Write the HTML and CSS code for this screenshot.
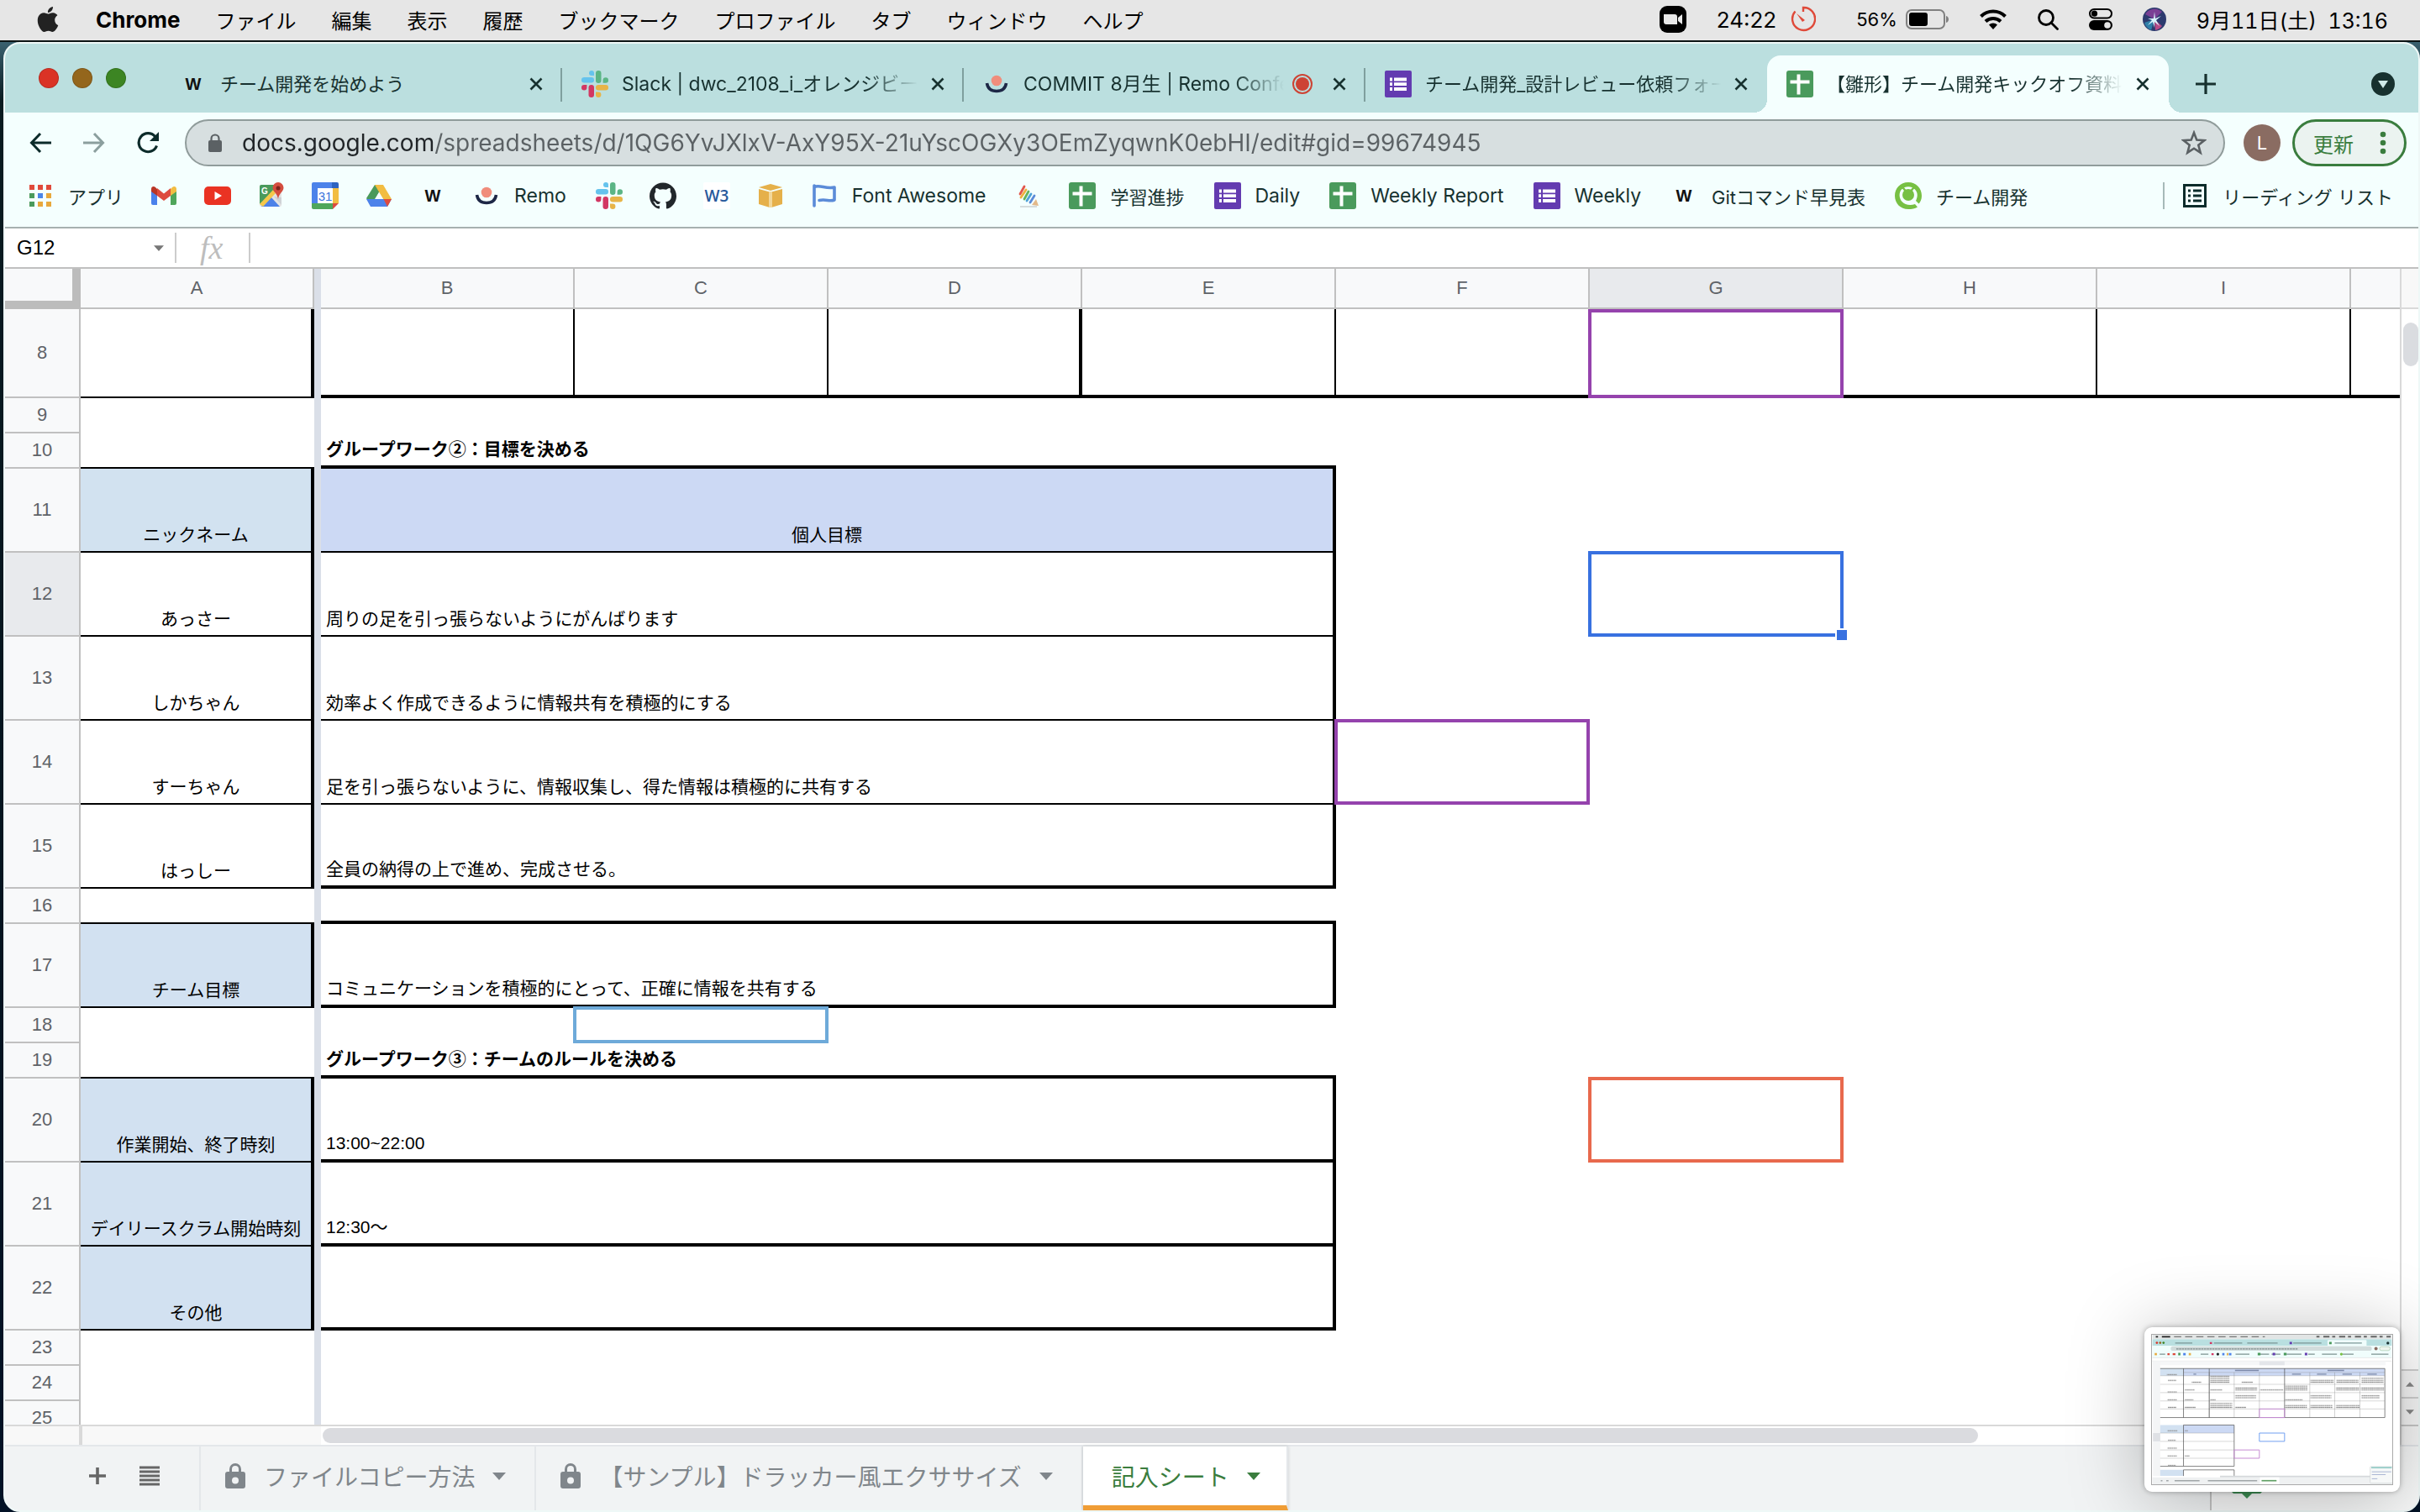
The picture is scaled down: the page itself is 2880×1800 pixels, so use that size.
FILE: index.html
```html
<!DOCTYPE html>
<html lang="ja">
<head>
<meta charset="utf-8">
<title>【雛形】チーム開発キックオフ資料</title>
<link rel="stylesheet" href="styles.css">
</head>
<body>
<svg class="defs" aria-hidden="true">
  <symbol id="i-close" viewBox="0 0 16 16"><path d="M1.500 1.500l13 13M14.500 1.500l-13 13" stroke="currentColor" stroke-width="2.600" fill="none"/></symbol>
  <symbol id="i-w" viewBox="0 0 32 32"><text x="16" y="23" text-anchor="middle" font-family="Liberation Sans, sans-serif" font-weight="700" font-size="20" fill="#111">W</text></symbol>
  <symbol id="i-slack" viewBox="0 0 32 32">
    <g fill="#65c3ed"><path d="M12 0a3 3 0 0 1 3 3v3h-3a3 3 0 0 1 0-6z"/><rect x="0" y="8" width="15" height="6.500" rx="3.200"/></g>
    <g fill="#5bb585"><rect x="17" y="0" width="6.500" height="15" rx="3.200"/><path d="M32 11.500a3.200 3.200 0 0 1-3.200 3.200h-3.200v-3.200a3.200 3.200 0 0 1 6.400 0z"/></g>
    <g fill="#e7b447"><rect x="17" y="17" width="15" height="6.500" rx="3.200"/><path d="M17 25.600h3.200a3.200 3.200 0 1 1-3.200 3.200z"/></g>
    <g fill="#d23763"><rect x="8.500" y="17" width="6.500" height="15" rx="3.200"/><path d="M0 20.200A3.200 3.200 0 0 1 3.200 17h3.200v3.200a3.200 3.200 0 0 1-6.400 0z"/></g>
  </symbol>
  <symbol id="i-remo" viewBox="0 0 32 32"><circle cx="16" cy="12" r="6.300" fill="#f08d7c"/><path d="M4.500 15c1 6.500 5.500 9.500 11.500 9.500S26.500 21.500 27.500 15" stroke="#1d2746" stroke-width="3.600" fill="none"/></symbol>
  <symbol id="i-sheets" viewBox="0 0 32 32"><rect width="32" height="32" rx="3" fill="#4a9a5c"/><path d="M4.500 13.500h23M14.500 4.500v24" stroke="#fff" stroke-width="4" fill="none"/></symbol>
  <symbol id="i-forms" viewBox="0 0 32 32"><rect width="32" height="32" rx="2" fill="#633bb0"/><path d="M11 10.500h15M11 16.200h15M11 22h15" stroke="#fff" stroke-width="3.800"/><path d="M6 10.500h3M6 16.200h3M6 22h3" stroke="#fff" stroke-width="3.800"/></symbol>
  <symbol id="i-lock" viewBox="0 0 24 32"><path d="M6.500 13V8a5.500 5.500 0 0 1 11 0v5" fill="none" stroke="currentColor" stroke-width="3"/><path fill-rule="evenodd" d="M3 11h18a3 3 0 0 1 3 3v14a3 3 0 0 1-3 3H3a3 3 0 0 1-3-3V14a3 3 0 0 1 3-3zm9 6.500a4 4 0 1 0 0 8 4 4 0 0 0 0-8z" fill="currentColor"/></symbol>
  <symbol id="i-down" viewBox="0 0 16 9"><path d="M0 0h16L8 9z" fill="currentColor"/></symbol>
</svg>

<header class="menubar">
  <svg class="apple" viewBox="0 0 24 24" role="img" aria-label="Apple"><path fill="#222" d="M12.152 6.896c-.948 0-2.415-1.078-3.960-1.040-2.040.027-3.910 1.183-4.961 3.014-2.117 3.675-.546 9.103 1.519 12.090 1.013 1.454 2.208 3.090 3.792 3.039 1.520-.065 2.090-.987 3.935-.987 1.831 0 2.350.987 3.960.948 1.637-.026 2.676-1.480 3.676-2.948 1.156-1.688 1.636-3.325 1.662-3.415-.039-.013-3.182-1.221-3.220-4.857-.026-3.040 2.480-4.494 2.597-4.559-1.429-2.090-3.623-2.324-4.390-2.376-2-.156-3.675 1.090-4.610 1.090zM15.530 3.830c.843-1.012 1.400-2.427 1.245-3.830-1.207.052-2.662.805-3.532 1.818-.780.896-1.454 2.338-1.273 3.714 1.338.104 2.715-.688 3.559-1.701"/></svg>
  <nav class="menus">
    <button class="menu app">Chrome</button>
    <button class="menu">ファイル</button>
    <button class="menu">編集</button>
    <button class="menu">表示</button>
    <button class="menu">履歴</button>
    <button class="menu">ブックマーク</button>
    <button class="menu">プロファイル</button>
    <button class="menu">タブ</button>
    <button class="menu">ウィンドウ</button>
    <button class="menu">ヘルプ</button>
  </nav>
  <div class="status">
    <svg width="32" height="32" viewBox="0 0 32 32"><rect width="32" height="32" rx="9"/><path d="M5 10h13a3 3 0 0 1 3 3v9H8a3 3 0 0 1-3-3zM22 14l5-4v12l-5-4z" fill="#e8e8e8"/></svg>
    <span class="pair wide"><span>24:22</span>
      <svg width="30" height="32" viewBox="0 0 30 32"><path d="M15 7V2a13.500 13.500 0 1 1-9.500 4.500" fill="none" stroke="#df4a3a" stroke-width="2.400"/><path d="M7 9l10 8-3 2z" fill="#df4a3a"/></svg></span>
    <span class="pair battery"><span class="percent">56%</span>
      <svg width="52" height="24" viewBox="0 0 52 24"><rect x="1" y="1" width="45" height="22" rx="6" fill="none" stroke="#808080" stroke-width="2"/><rect x="4" y="4" width="22" height="16" rx="3"/><path d="M48 8c4 1 4 7 0 8z" fill="#808080"/></svg></span>
    <svg width="32" height="24" viewBox="0 0 32 24"><g fill="none" stroke="#000" stroke-width="4"><path d="M1.500 8.500a20.500 20.500 0 0 1 29 0"/><path d="M7 14.500a13 13 0 0 1 18 0"/></g><path d="M16 24l-5-5.500a7 7 0 0 1 10 0z"/></svg>
    <svg width="26" height="26" viewBox="0 0 26 26"><g fill="none" stroke="#000" stroke-width="2.800"><circle cx="11" cy="11" r="8.500"/><path d="M17 17l7.500 7.500" stroke-linecap="round"/></g></svg>
    <svg width="28" height="26" viewBox="0 0 28 26"><rect x="1" y="1" width="26" height="10.500" rx="5.200" fill="none" stroke="#000" stroke-width="2"/><circle cx="6.500" cy="6.200" r="3.600"/><rect y="14" width="28" height="12" rx="6"/><circle cx="22" cy="20" r="3.800" fill="#e6e6e6"/></svg>
    <svg width="28" height="28" viewBox="0 0 28 28"><circle cx="14" cy="14" r="14" fill="#2c3a6e"/><path d="M3 8a13 13 0 0 1 20-3l-9 9z" fill="#7a3f94"/><path d="M2 18l12-4-4 13A14 14 0 0 1 2 18z" fill="#2f7fa8"/><path d="M14 14l9 8a13 13 0 0 1-8 5z" fill="#b54a86"/><path d="M14 5l1 8 7-3-6 5 4 7-6-5 0 7-2-7-6 4 5-6-5-2 7 0z" fill="#d8f3fa"/></svg>
    <time>9月11日(土)&nbsp; 13:16</time>
  </div>
</header>

<div class="window">
  <div class="tabstrip">
    <div class="lights"><i class="light red"></i><i class="light amber"></i><i class="light green"></i></div>
    <div class="tabs" role="tablist">
      <div class="tab"><svg class="fav"><use href="#i-w"/></svg><span class="title jp">チーム開発を始めよう</span><button class="close" aria-label="閉じる"><svg><use href="#i-close"/></svg></button></div>
      <div class="tab"><svg class="fav"><use href="#i-slack"/></svg><span class="title fade">Slack | dwc_2108_i_オレンジビーチ</span><button class="close" aria-label="閉じる"><svg><use href="#i-close"/></svg></button></div>
      <div class="tab"><svg class="fav"><use href="#i-remo"/></svg><span class="title fade">COMMIT 8月生 | Remo Conference</span><svg class="rec" viewBox="0 0 24 24"><circle cx="12" cy="12" r="11" fill="none" stroke="#cd4334" stroke-width="2"/><circle cx="12" cy="12" r="8" fill="#cd4334"/></svg><button class="close" aria-label="閉じる"><svg><use href="#i-close"/></svg></button></div>
      <div class="tab last"><svg class="fav"><use href="#i-forms"/></svg><span class="title jp fade">チーム開発_設計レビュー依頼フォーム</span><button class="close" aria-label="閉じる"><svg><use href="#i-close"/></svg></button></div>
      <div class="tab active"><svg class="fav"><use href="#i-sheets"/></svg><span class="title jp fade">【雛形】チーム開発キックオフ資料</span><button class="close" aria-label="閉じる"><svg><use href="#i-close"/></svg></button></div>
    </div>
    <button class="plain newtab" aria-label="新しいタブ"><svg width="24" height="24" viewBox="0 0 24 24"><path d="M12 0v24M0 12h24" stroke="currentColor" stroke-width="3.200"/></svg></button>
    <button class="plain tabsearch" aria-label="タブを検索"><svg width="28" height="28" viewBox="0 0 28 28"><circle cx="14" cy="14" r="14" fill="#17312f"/><path d="M8 10h12l-6 9z" fill="#cfeae8"/></svg></button>
  </div>

  <div class="toolbar">
    <button class="nav" aria-label="戻る"><svg viewBox="0 0 26 26"><path d="M26 13H3M13 2L2.500 13 13 24" fill="none" stroke="#0c2b2a" stroke-width="3"/></svg></button>
    <button class="nav" aria-label="進む"><svg viewBox="0 0 26 26"><path d="M0 13h23M13 2l10.500 11L13 24" fill="none" stroke="#8b9f9e" stroke-width="3"/></svg></button>
    <button class="nav" aria-label="再読み込み"><svg viewBox="0 0 26 26"><path d="M23.500 16.500A11 11 0 1 1 21.500 5.500" fill="none" stroke="#0c2b2a" stroke-width="3.200"/><path d="M26 0v11H15z" fill="#0c2b2a"/></svg></button>
    <div class="omnibox">
      <svg class="padlock" viewBox="0 0 16 22"><path d="M3.500 10V6a4.500 4.500 0 0 1 9 0v4" fill="none" stroke="#5b6164" stroke-width="2.200"/><rect y="8" width="16" height="14" rx="2" fill="#5b6164"/></svg>
      <input class="url" aria-label="アドレス" value="docs.google.com/spreadsheets/d/1QG6YvJXlxV-AxY95X-21uYscOGXy3OEmZyqwnK0ebHI/edit#gid=99674945">
      <button class="plain" aria-label="ブックマークに追加"><svg width="30" height="30" viewBox="0 0 30 30"><path d="M15 3l3.300 8.600 9.200.500-7.200 5.700 2.400 8.900L15 21.700l-7.700 5 2.400-8.900-7.200-5.700 9.200-.500z" fill="none" stroke="#5b6164" stroke-width="2.600"/></svg></button>
    </div>
    <button class="avatar">L</button>
    <button class="update">更新<svg width="8" height="28" viewBox="0 0 8 28"><g fill="#3a7d3e"><circle cx="4" cy="4" r="3.300"/><circle cx="4" cy="14" r="3.300"/><circle cx="4" cy="24" r="3.300"/></g></svg></button>
  </div>

  <nav class="bookmarks">
    <a href="#" class="bm jp"><svg viewBox="0 0 32 32"><g fill="#e04a3b"><path d="M3 3h6v6H3zM13 3h6v6h-6zM23 3h6v6h-6z"/></g><g fill="#4a9a5c"><path d="M3 13h6v6H3zM3 23h6v6H3z"/></g><path d="M13 13h6v6h-6z" fill="#4a86e8"/><path d="M23 13h6v6h-6zM13 23h6v6h-6zM23 23h6v6h-6z" fill="#e8a83c"/></svg>アプリ</a>
    <a href="#" class="bm" aria-label="Gmail"><svg viewBox="0 0 32 32"><path d="M1 9v16a2 2 0 0 0 2 2h5V14z" fill="#4a82ec"/><path d="M31 9v16a2 2 0 0 1-2 2h-5V14z" fill="#4fa65b"/><path d="M24 8v8l7-5V8c0-3-3-4-5-2z" fill="#f2bd42"/><path d="M8 8v8l-7-5V8c0-3 3-4 5-2z" fill="#b93526"/><path d="M8 7l8 6.500L24 7v9l-8 6-8-6z" fill="#dd4b3e"/></svg></a>
    <a href="#" class="bm" aria-label="YouTube"><svg viewBox="0 0 32 32"><rect y="5" width="32" height="22" rx="5" fill="#ea3323"/><path d="M12.500 11v10l8.500-5z" fill="#fff"/></svg></a>
    <a href="#" class="bm" aria-label="Google マップ"><svg viewBox="0 0 32 32"><rect x="2" y="3" width="26" height="26" rx="2" fill="#e4e4e4"/><path d="M2 5a2 2 0 0 1 2-2h16v8L2 26z" fill="#4a9a5c"/><path d="M4 29l11-12 11 12z" fill="#4d82e8"/><path d="M2 26L18 9l3 4L6 29z" fill="#f4c84b"/><path d="M28 18v9l-9-10z" fill="#cfd3d6"/><path d="M24 0a6.500 6.500 0 0 1 6.500 6.500C30.500 11 25 13 24 20c-1-7-6.500-9-6.500-13.500A6.500 6.500 0 0 1 24 0z" fill="#d44d3f"/><circle cx="24" cy="7" r="2.500" fill="#7c231b"/><text x="4" y="14" font-family="Liberation Sans, sans-serif" font-size="10" font-weight="700" fill="#fff">G</text></svg></a>
    <a href="#" class="bm" aria-label="Google カレンダー"><svg viewBox="0 0 32 32"><path d="M2 0h22v7H0V2a2 2 0 0 1 2-2zM0 7h7v19H0z" fill="#4d82ea"/><path d="M24 0h6a2 2 0 0 1 2 2v5h-8z" fill="#2f63c0"/><path d="M25 7h7v18h-7z" fill="#f2bd42"/><path d="M0 25h25v7H2a2 2 0 0 1-2-2z" fill="#4fa65b"/><path d="M25 25h7l-7 7z" fill="#dd4b3e"/><path d="M7 7h18v18H7z" fill="#fff"/><text x="16" y="22" text-anchor="middle" font-family="Liberation Sans, sans-serif" font-size="15" fill="#3b73dc">31</text></svg></a>
    <a href="#" class="bm" aria-label="Google ドライブ"><svg viewBox="0 0 32 32"><path d="M11 3h10l-5 9-9 17-6-10z" fill="#4a9a5c"/><path d="M11 3h10l10 17H21z" fill="#f2bd42"/><path d="M1 20h30l-5 9H6z" fill="#4d82ea"/><path d="M31 20l-5 9-4.500-9z" fill="#dd4b3e"/><path d="M16 12l-5 8h10z" fill="#f4fffe"/></svg></a>
    <a href="#" class="bm" aria-label="W"><svg><use href="#i-w"/></svg></a>
    <a href="#" class="bm named"><svg><use href="#i-remo"/></svg>Remo</a>
    <a href="#" class="bm" aria-label="Slack"><svg><use href="#i-slack"/></svg></a>
    <a href="#" class="bm" aria-label="GitHub"><svg viewBox="0 0 24 24"><path fill="#22272b" d="M12 .297c-6.630 0-12 5.373-12 12 0 5.303 3.438 9.800 8.205 11.385.600.113.820-.258.820-.577 0-.285-.010-1.040-.015-2.040-3.338.724-4.042-1.610-4.042-1.610C4.422 18.070 3.633 17.700 3.633 17.700c-1.087-.744.084-.729.084-.729 1.205.084 1.838 1.236 1.838 1.236 1.070 1.835 2.809 1.305 3.495.998.108-.776.417-1.305.760-1.605-2.665-.300-5.466-1.332-5.466-5.930 0-1.310.465-2.380 1.235-3.220-.135-.303-.540-1.523.105-3.176 0 0 1.005-.322 3.300 1.230.960-.267 1.980-.399 3-.405 1.020.006 2.040.138 3 .405 2.280-1.552 3.285-1.230 3.285-1.230.645 1.653.240 2.873.120 3.176.765.840 1.230 1.910 1.230 3.220 0 4.610-2.805 5.625-5.475 5.920.420.360.810 1.096.810 2.220 0 1.606-.015 2.896-.015 3.286 0 .315.210.690.825.570C20.565 22.092 24 17.592 24 12.297c0-6.627-5.373-12-12-12"/></svg></a>
    <a href="#" class="bm" aria-label="W3"><svg viewBox="0 0 32 32"><rect width="32" height="32" rx="2" fill="#fff"/><text x="16" y="23" text-anchor="middle" font-family="Open Sans, sans-serif" font-weight="600" font-size="19" fill="#285a9c">W3</text></svg></a>
    <a href="#" class="bm" aria-label="AWS"><svg viewBox="0 0 32 32"><path d="M2 6l14-4 14 4-14 4z" fill="#e5b04a"/><path d="M2 8l13 3.500V30L2 26zM30 8l-13 3.500V30l13-4z" fill="#e5b04a"/><path d="M14 11h4v19h-4z" fill="#f2d79a"/></svg></a>
    <a href="#" class="bm named"><svg viewBox="0 0 32 32"><path d="M4 28V4M4 5.500c7-3 14 3 24 .5v15c-6 2.500-10-1.500-18 .5" fill="none" stroke="#5b8bd8" stroke-width="3.600" stroke-linejoin="round" stroke-linecap="round"/></svg>Font Awesome</a>
    <a href="#" class="bm" aria-label="Pencil"><svg viewBox="0 0 32 32"><g stroke-width="2.800" stroke-linecap="round"><path d="M6 14l5-9" stroke="#e2574c"/><path d="M7 18l6-9" stroke="#efb13f"/><path d="M11 20l5-9" stroke="#67b35e"/><path d="M14 22l5-8" stroke="#4fa3d8"/><path d="M18 24l5-8" stroke="#5b8bd8"/></g><path d="M20 27l5-7 3 8z" fill="#e3b98a"/><path d="M6 29h20" stroke="#d5dcdc" stroke-width="2"/></svg></a>
    <a href="#" class="bm jp named"><svg><use href="#i-sheets"/></svg>学習進捗</a>
    <a href="#" class="bm named"><svg><use href="#i-forms"/></svg>Daily</a>
    <a href="#" class="bm named"><svg><use href="#i-sheets"/></svg>Weekly Report</a>
    <a href="#" class="bm named"><svg><use href="#i-forms"/></svg>Weekly</a>
    <a href="#" class="bm jp named"><svg><use href="#i-w"/></svg>Gitコマンド早見表</a>
    <a href="#" class="bm jp"><svg viewBox="0 0 32 32"><path d="M16 0c9.500 0 16 7 16 16 0 4-1.500 7.500-3.500 9.500L25 22c2.500-5 2.500-10-1-13.500C20 4 12 4 8 8.500 4.500 12.500 5 19 8.500 23c3.500 4 10 5 15.500 3l3 3.500C24 31.500 20 32 16 32 6.500 32 0 25 0 16S6.500 0 16 0z" fill="#77c043"/><circle cx="16" cy="15" r="7" fill="#77c043"/><path d="M8.500 5l4 5M23.500 5l-4 5" stroke="#77c043" stroke-width="2.500"/></svg>チーム開発</a>
    <a href="#" class="bm jp reading"><svg viewBox="0 0 32 32"><rect x="3.500" y="3.500" width="25" height="25" fill="none" stroke="#0c2b2a" stroke-width="3"/><path d="M8 10h3M8 16h3M8 22h3M14 10h10M14 16h10M14 22h10" stroke="#0c2b2a" stroke-width="3"/></svg>リーディング リスト</a>
  </nav>

  <div class="formula">
    <input class="namebox" aria-label="名前ボックス" value="G12">
    <svg class="caret"><use href="#i-down"/></svg>
    <span class="fx">fx</span>
    <input class="fxinput" aria-label="数式">
  </div>

  <main class="sheet">
    <div class="grid">
      <table class="cells">
        <colgroup><col class="c-head"><col class="c-a"><col class="c-freeze"><col class="c-n"><col class="c-n"><col class="c-n"><col class="c-n"><col class="c-n"><col class="c-n"><col class="c-n"><col class="c-n"><col></colgroup>
        <thead>
          <tr class="heads"><td class="corner"></td><th>A</th><td class="fz"></td><th>B</th><th>C</th><th>D</th><th>E</th><th>F</th><th class="sel">G</th><th>H</th><th>I</th><th class="end"></th></tr>
        </thead>
        <tbody>
          <tr class="r8"><th>8</th><td class="a b2 r4"></td><td class="fz"></td><td class="b4 r2"></td><td class="b4 r2"></td><td class="b4 r4"></td><td class="b4 r2"></td><td class="b4 r2"></td><td class="b4 cursor purple"></td><td class="b4 r2"></td><td class="b4 r2"></td><td class="b4"></td></tr>
          <tr class="s"><th>9</th><td></td><td class="fz"></td><td colspan="4"></td><td colspan="5"></td></tr>
          <tr class="s"><th>10</th><td class="b2"></td><td class="fz"></td><td class="b4 bold" colspan="4">グループワーク②：目標を決める</td><td colspan="5"></td></tr>
          <tr class="l"><th>11</th><td class="a b2 r4 sky">ニックネーム</td><td class="fz"></td><td class="b2 r4 goal" colspan="4">個人目標</td><td colspan="5"></td></tr>
          <tr class="l"><th class="sel">12</th><td class="a b2 r4">あっさー</td><td class="fz"></td><td class="b2 r4" colspan="4">周りの足を引っ張らないようにがんばります</td><td></td><td class="cursor top blue"><i class="handle"></i></td><td colspan="3"></td></tr>
          <tr class="l"><th>13</th><td class="a b2 r4">しかちゃん</td><td class="fz"></td><td class="b2 r4" colspan="4">効率よく作成できるように情報共有を積極的にする</td><td colspan="5"></td></tr>
          <tr class="l"><th>14</th><td class="a b2 r4">すーちゃん</td><td class="fz"></td><td class="b2 r4" colspan="4">足を引っ張らないように、情報収集し、得た情報は積極的に共有する</td><td class="cursor top purple"></td><td colspan="4"></td></tr>
          <tr class="l"><th>15</th><td class="a b2 r4">はっしー</td><td class="fz"></td><td class="b4 r4" colspan="4">全員の納得の上で進め、完成させる。</td><td colspan="5"></td></tr>
          <tr class="s"><th>16</th><td class="b2"></td><td class="fz"></td><td class="b4" colspan="4"></td><td colspan="5"></td></tr>
          <tr class="l"><th>17</th><td class="a b2 r4 sky2">チーム目標</td><td class="fz"></td><td class="b4 r4" colspan="4">コミュニケーションを積極的にとって、正確に情報を共有する</td><td colspan="5"></td></tr>
          <tr class="s"><th>18</th><td></td><td class="fz"></td><td></td><td class="cursor top light"></td><td colspan="7"></td></tr>
          <tr class="s"><th>19</th><td class="b2"></td><td class="fz"></td><td class="b4 bold" colspan="4">グループワーク③：チームのルールを決める</td><td colspan="5"></td></tr>
          <tr class="l"><th>20</th><td class="a b2 r4 sky2">作業開始、終了時刻</td><td class="fz"></td><td class="b4 r4" colspan="4">13:00~22:00</td><td></td><td class="cursor top orange"></td><td colspan="3"></td></tr>
          <tr class="l"><th>21</th><td class="a b2 r4 sky2">デイリースクラム開始時刻</td><td class="fz"></td><td class="b4 r4" colspan="4">12:30〜</td><td colspan="5"></td></tr>
          <tr class="l"><th>22</th><td class="a b2 r4 sky2">その他</td><td class="fz"></td><td class="b4 r4" colspan="4"></td><td colspan="5"></td></tr>
          <tr class="s"><th>23</th><td></td><td class="fz"></td><td colspan="9"></td></tr>
          <tr class="s"><th>24</th><td></td><td class="fz"></td><td colspan="9"></td></tr>
          <tr class="s"><th>25</th><td></td><td class="fz"></td><td colspan="9"></td></tr>
        </tbody>
      </table>
    </div>
    <div class="vbar">
      <div class="vhead"></div>
      <div class="vtrack"><div class="vthumb"></div></div>
      <button class="step" aria-label="上へ"><svg class="flip"><use href="#i-down"/></svg></button>
      <button class="step" aria-label="下へ"><svg><use href="#i-down"/></svg></button>
    </div>
    <div class="hbar"><div class="hhead"></div><div class="hfreeze"></div><div class="htrack"><div class="hthumb"></div></div></div>
    <div class="hcorner"></div>
  </main>

  <footer class="sheettabs">
    <div class="tools">
      <button class="plain" aria-label="シートを追加"><svg width="20" height="20" viewBox="0 0 20 20"><path d="M10 0v20M0 10h20" stroke="#666" stroke-width="3.600"/></svg></button>
      <button class="plain" aria-label="すべてのシート"><svg width="24" height="24" viewBox="0 0 24 24"><path d="M0 2h24M0 7h24M0 12h24M0 17h24M0 22h24" stroke="#666" stroke-width="3.200"/></svg></button>
    </div>
    <button class="stab"><svg class="slock"><use href="#i-lock"/></svg>ファイルコピー方法<svg class="sdown"><use href="#i-down"/></svg></button>
    <button class="stab"><svg class="slock"><use href="#i-lock"/></svg>【サンプル】ドラッカー風エクササイズ<svg class="sdown"><use href="#i-down"/></svg></button>
    <button class="stab current">記入シート<svg class="sdown"><use href="#i-down"/></svg></button>
    <div class="explore"><svg width="36" height="8" viewBox="0 0 36 8"><path d="M0 0h36l-2 2H24l-6 6-6-6H2z" fill="#3f9156"/></svg></div>
  </footer>
</div>

<aside class="preview">
  <svg viewBox="0 0 864 540" role="img" aria-label="スクリーンショットのプレビュー">
    <defs><pattern id="lines" width="7" height="7" patternUnits="userSpaceOnUse"><path d="M0 3.500h6" stroke="#8c8c8c" stroke-width="3.500"/></pattern></defs>
    <rect width="864" height="540" fill="#fff"/>
    <rect width="864" height="15" fill="#e2e5e5"/>
    <rect y="16" width="864" height="24" fill="#b9dfe0"/>
    <path d="M632 40V22q0-3 3-3h135q3 0 3 3v18z" fill="#f0fdfc"/>
    <rect y="40" width="864" height="42" fill="#f0fdfc"/>
    <rect x="66" y="42" width="726" height="16" rx="8" fill="#d2dcdc"/>
    <circle cx="807" cy="50" r="6" fill="#8a6c62"/><rect x="820" y="43" width="38" height="14" rx="7" fill="#eef5ee" stroke="#5d9a62"/>
    <g stroke="#3c4040" stroke-width="5" fill="none">
      <path d="M12 7h8M34 7h30" stroke="#222"/>
      <path d="M78 7h328" stroke-dasharray="26 14" stroke-width="4" stroke="#777"/>
      <path d="M592 7h268" stroke-dasharray="11 14 22 10" stroke-width="6" stroke="#666"/>
      <path d="M82 30h62M222 30h102M342 30h110M508 30h102M658 30h98" stroke-width="4" stroke="#7b9695"/>
      <path d="M86 51h440" stroke-width="4" stroke="#7f8a8a" stroke-dasharray="8 2"/>
      <path d="M26 70h20M174 70h28M300 70h50M385 70h36M430 70h32M484 70h54M562 70h24M612 70h54M686 70h40M790 70h62" stroke-width="4" stroke="#7c9290"/>
    </g>
    <g><circle cx="16" cy="29" r="4" fill="#da3326"/><circle cx="28" cy="29" r="4" fill="#94661c"/><circle cx="40" cy="29" r="4" fill="#3c8523"/>
      <path d="M8 70h8" stroke="#e8a83c" stroke-width="8"/><path d="M54 70h8M73 70h10" stroke="#dd4b3e" stroke-width="7"/><path d="M93 70h8M380 70h10M474 70h10M638 30h9" stroke="#4a9a5c" stroke-width="9"/><path d="M111 70h9M252 70h8M276 70h9" stroke="#4d82ea" stroke-width="8"/><path d="M131 70h8M268 70h6" stroke="#e5b04a" stroke-width="8"/><path d="M434 70h9M550 70h9M495 30h9" stroke="#633bb0" stroke-width="9"/><path d="M207 30h8M213 70h8" stroke="#d23763" stroke-width="7"/><circle cx="236" cy="70" r="5" fill="#22272b"/><circle cx="682" cy="70" r="5" fill="#77c043"/><circle cx="850" cy="30" r="5" fill="#17312f"/></g>
    <path d="M0 83h864M0 95h864" stroke="#b8bebe"/>
    <rect x="2" y="96" width="840" height="14" fill="#f6f7f8"/><rect x="386" y="96" width="91" height="14" fill="#e4e6ea"/>
    <rect x="2" y="96" width="26" height="414" fill="#f4f5f6"/><rect x="2" y="355" width="26" height="30" fill="#dfe1e5"/>
    <path d="M28 122h84v26H28zM28 326h84v29H28zM28 488h84v22H28z" fill="#d2e1f1"/>
    <path d="M112 122h726v26H112zM112 326h183v29H112z" fill="#ccd9f4"/>
    <path d="M28 148h810M28 179h810M28 209h810M28 239h810M28 268h810M112 136h726M28 355h267M28 385h267M28 416h267M28 446h267" stroke="#888"/>
    <path d="M205 136v163M295 136v163M386 136v163M568 136v163M658 136v163M749 136v163" stroke="#777"/>
    <path d="M28 122h811v177H28M112 122v177M205 122v177M477 122v177M112 326v149M28 475h84M112 510v-22h183v22M112 326h183v149H112" fill="none" stroke="#444" stroke-width="2"/>
    <path d="M52 140h36v7H52zM56 161h30v7H56zM54 203h34v7H54zM54 231h34v7H54zM56 259h30v7H56zM54 343h36v7H54zM56 378h28v7H56zM54 406h34v7H54zM54 434h34v7H54zM56 469h28v7H56zM142 168h34v7h-34zM116 196h36v7h-36zM116 231h32v7h-32zM116 259h40v7h-40zM208 196h44v7h-44zM208 231h20v7h-20zM322 168h40v7h-40zM298 259h40v7h-40zM116 343h12v7h-12zM116 434h18v7h-18zM208 147h70v28h-70zM298 189h80v14h-80zM388 196h84v7h-84zM298 217h76v14h-76zM208 245h80v21h-80zM478 182h82v21h-82zM570 161h84v14h-84zM664 161h80v14h-80zM754 154h80v21h-80zM662 189h84v14h-84zM752 189h84v14h-84zM478 231h64v7h-64zM570 217h76v14h-76zM754 217h66v14h-66zM478 252h80v14h-80zM570 252h80v14h-80zM662 252h86v14h-86z" fill="url(#lines)"/>
    <path d="M298 129h86M632 129h60M148 142h10M504 142h32M594 142h34M686 142h34M776 142h34" stroke="#7c89a8" stroke-width="4"/>
    <path d="M386 268h91v31h-91zM295 416h91v30h-91z" fill="none" stroke="#c58bd2" stroke-width="3"/>
    <path d="M386 355h91v30h-91z" fill="none" stroke="#6f9ff0" stroke-width="3"/>
    <rect x="244" y="509" width="620" height="6" fill="#d5d8db"/><rect y="515" width="864" height="25" fill="#eff1f2"/><rect x="388" y="515" width="70" height="25" fill="#fff"/>
    <path d="M30 527h6M50 527h8M80 527h90M200 527h178" stroke="#a0a5a8" stroke-width="5"/><path d="M394 527h54" stroke="#5f9f64" stroke-width="5"/>
    <rect x="786" y="476" width="84" height="60" rx="3" fill="#f6f8f8" stroke="#d0d4d4" stroke-width="2"/><path d="M790 480h74" stroke="#8fcac4" stroke-width="5"/><path d="M792 495h70M792 505h50M792 520h20" stroke="#a9b4d2" stroke-width="3"/>
  </svg>
</aside>
</body>
</html>
```
FILE: styles.css
```css
* { box-sizing: border-box; }

html, body { height: 100%; }

body {
  margin: 0;
  display: flex;
  flex-direction: column;
  overflow: hidden;
  position: relative;
  background: linear-gradient(#5b93a8 0, #0a1b20 120px, #04141f 60%, #031226);
  font-family: Inter, "Noto Sans CJK JP", sans-serif;
  color: #000;
}

button, input {
  font: inherit;
  color: inherit;
  border: 0;
  padding: 0;
  margin: 0;
  background: none;
  outline: 0;
}

a { color: inherit; text-decoration: none; }
svg { display: block; flex: none; }
.defs { display: none; }
.plain { display: flex; align-items: center; justify-content: center; }

/* macOS menu bar */
.menubar {
  flex: none;
  height: 50px;
  display: flex;
  align-items: center;
  padding: 0 38px 2px 42px;
  background: #e6e6e6;
  border-bottom: 2px solid #0b1414;
  font-size: 24px;
}
.apple { width: 30px; height: 32px; }
.menus { display: flex; gap: 42px; margin-left: 42px; }
.menu { white-space: nowrap; }
.menu.app { font-size: 26px; font-weight: 700; }
.status { display: flex; align-items: center; gap: 36px; margin-left: auto; font-size: 26px; }
.pair { display: flex; align-items: center; gap: 10px; }
.pair.wide { gap: 17px; }
.battery { margin-left: 12px; }
.percent { font-size: 22px; }
.status time { white-space: nowrap; font-size: 25px; font-variant-numeric: tabular-nums; }

/* Browser window */
.window {
  flex: 1;
  min-height: 0;
  display: flex;
  flex-direction: column;
  margin-left: 4px;
  border: 2px solid #eef8f7;
  border-radius: 20px;
  overflow: hidden;
  background: #fff;
}

.tabstrip { flex: none; height: 82px; display: flex; align-items: center; background: #bbdfdf; padding: 14px 28px 0 40px; color: #17312f; }
.lights { display: flex; gap: 16px; width: 145px; margin-bottom: 14px; }
.light { width: 24px; height: 24px; border-radius: 50%; border: 1px solid rgba(0, 0, 0, .15); }
.red { background: #da3326; }
.amber { background: #94661c; }
.green { background: #3c8523; }
.tabs { display: flex; align-self: stretch; }
.tab { width: 478px; height: 68px; display: flex; align-items: center; padding: 0 15px 0 23px; position: relative; }
.tab:not(.last):not(.active)::after { content: ""; position: absolute; right: 0; top: 15px; width: 2px; height: 40px; background: #7f9f9e; }
.fav { width: 32px; height: 32px; margin-right: 16px; }
.title { flex: 1; min-width: 0; overflow: hidden; white-space: nowrap; font-size: 23px; line-height: 32px; }
.title.jp { font-size: 22px; }
.title.fade { -webkit-mask-image: linear-gradient(90deg, #000 calc(100% - 60px), transparent); mask-image: linear-gradient(90deg, #000 calc(100% - 60px), transparent); }
.rec { width: 24px; height: 24px; margin: 0 8px 0 10px; }
.close { width: 32px; height: 32px; margin-left: 8px; display: flex; align-items: center; justify-content: center; }
.close svg { width: 16px; height: 16px; }
.tab.active { background: #f4fffe; border-radius: 16px 16px 0 0; }
.tab.active::before, .tab.active::after { content: ""; position: absolute; bottom: 0; width: 16px; height: 16px; }
.tab.active::before { left: -16px; background: radial-gradient(circle at 0 0, transparent 16px, #f4fffe 16px); }
.tab.active::after { right: -16px; background: radial-gradient(circle at 100% 0, transparent 16px, #f4fffe 16px); }
.newtab { margin-left: 32px; }
.tabsearch { margin-left: auto; }

.toolbar { flex: none; display: flex; align-items: center; padding: 8px 14px 8px 10px; background: #f4fffe; }
.nav { width: 64px; height: 48px; display: flex; align-items: center; justify-content: center; }
.nav svg { width: 26px; height: 26px; }
.omnibox { flex: 1; height: 56px; display: flex; align-items: center; gap: 24px; margin: 0 22px 0 12px; padding: 0 20px 0 26px; border: 2px solid #909c9b; border-radius: 28px; background: #d7dfe0; }
.padlock { width: 16px; height: 22px; }
.url {
  flex: 1;
  min-width: 0;
  height: 40px;
  font-size: 28px;
  color: transparent;
  background: linear-gradient(90deg, #202427 228px, #5b6164 228px);
  -webkit-background-clip: text;
  background-clip: text;
}
.avatar { width: 44px; height: 44px; border-radius: 50%; background: #8a6c62; color: #fff; font-size: 22px; }
.update { width: 136px; height: 56px; display: flex; align-items: center; justify-content: space-between; margin-left: 14px; padding: 0 21px 0 22px; border: 3px solid #3a7d3e; border-radius: 28px; background: #ebf3f0; color: #3a7d3e; font-size: 24px; }

.bookmarks { flex: none; display: flex; align-items: center; gap: 32px; height: 66px; padding: 0 30px 10px 26px; background: #f4fffe; border-bottom: 2px solid #a6b1b0; color: #17312f; font-size: 23px; }
.bm { display: flex; align-items: center; gap: 17px; white-space: nowrap; }
.bm.jp { font-size: 22px; }
.bm.named { margin-right: 3px; }
.bm svg { width: 32px; height: 32px; }
.reading { margin-left: auto; padding-left: 20px; border-left: 2px solid #a6b9b8; }

/* Formula bar */
.formula { flex: none; display: flex; align-items: center; height: 48px; border-bottom: 2px solid #c0c0c0; font-family: "Liberation Sans", "Noto Sans CJK JP", sans-serif; font-size: 24px; }
.namebox { width: 160px; padding-left: 14px; }
.caret { width: 12px; height: 7px; margin-left: 17px; color: #777; }
.fx { width: 90px; margin-left: 13px; padding-left: 28px; border-left: 2px solid #ccc; border-right: 2px solid #ccc; color: #bdbdbd; font-family: "Liberation Serif", serif; font-style: italic; font-size: 38px; line-height: 36px; }
.fxinput { flex: 1; height: 40px; padding: 0 12px; }

/* Spreadsheet */
.sheet { flex: 1; min-height: 0; display: grid; grid-template: minmax(0, 1fr) 24px / minmax(0, 1fr) 22px; }
.grid { overflow: hidden; }
.cells { width: 100%; table-layout: fixed; border-collapse: separate; border-spacing: 0; font-family: "Liberation Sans", "Noto Sans CJK JP", sans-serif; font-size: 21px; line-height: 24px; }
.c-head { width: 90px; }
.c-a { width: 278px; }
.c-freeze { width: 8px; }
.c-n { width: 302px; }
.cells th { padding: 0; background: #f8f9fa; color: #5f6368; font-weight: 400; font-size: 22px; border: solid #c0c0c0; border-width: 0 2px 2px 0; }
.cells th.sel { background: #e8eaed; }
.cells th.end { border-right: 0; }
.cells td { padding: 0 6px 7px; vertical-align: bottom; white-space: nowrap; border: 0 solid #000; }
.heads { height: 48px; }
.r8 { height: 106px; }
.s { height: 42px; }
.l { height: 100px; }
.cells .corner { background: #f8f9fa; border: solid #bcbcbc; border-width: 0 10px 10px 0; }
.cells .fz { padding: 0; background: #dadfe8; }
.cells td.a { text-align: center; padding-left: 0; padding-right: 0; }
.cells td.b2 { border-bottom-width: 2px; }
.cells td.b4 { border-bottom-width: 4px; }
.cells td.r2 { border-right-width: 2px; }
.cells td.r4 { border-right-width: 4px; }
.cells td.bold { font-weight: 700; }
.cells td.sky { background: #d2e2f0; }
.cells td.sky2 { background: #d2e1f1; }
.cells td.goal { background: #ccd9f4; text-align: center; }
.cells td.cursor { position: relative; }
.cursor::after { content: ""; position: absolute; inset: 0 0 0 -2px; border: 4px solid; }
.cells td.purple { color: #9543ad; }
.cursor.purple.b4::after { inset: 0 0 -4px -2px; }
.cursor.top::after { inset: -2px 0 0 -2px; }
.cells td.blue { color: #3871e0; }
.cells td.light { color: #6eaad9; }
.cells td.orange { color: #e8694d; }
.handle { position: absolute; z-index: 1; right: -6px; bottom: -6px; width: 16px; height: 16px; border: 2px solid #fff; background: #3871e0; }

.vbar { display: flex; flex-direction: column; border-left: 2px solid #d9d9d9; }
.vhead { height: 48px; background: #f8f8f8; border-bottom: 2px solid #d9d9d9; }
.vtrack { flex: 1; padding: 16px 0 0 2px; }
.vthumb { height: 52px; border-radius: 9px; background: #dadce0; }
.step { height: 33px; display: flex; align-items: center; justify-content: center; border-top: 2px solid #d0d0d0; background: #f8f8f8; color: #888; }
.step svg { width: 10px; height: 6px; }
.flip { transform: rotate(180deg); }
.hbar { display: flex; border-top: 2px solid #d9d9d9; }
.hhead { width: 92px; background: #f8f8f8; border-right: 4px solid #d9d9d9; }
.hfreeze { width: 284px; background: #f8f8f8; }
.htrack { flex: 1; padding: 2px 0 2px 2px; }
.hthumb { width: calc(80% - 8px); height: 18px; border-radius: 9px; background: #dadbdf; }
.hcorner { border-top: 2px solid #c8c8c8; border-left: 2px solid #d9d9d9; background: #f8f8f8; }

/* Sheet tabs */
.sheettabs { flex: none; display: flex; height: 78px; border-top: 2px solid #e4e7ea; background: #f1f3f4; color: #80868b; font-size: 28px; }
.tools { display: flex; gap: 40px; align-items: center; width: 233px; padding: 0 0 6px 100px; border-right: 2px solid #e4e7ea; }
.stab { display: flex; align-items: center; padding: 0 34px 6px 29px; border-right: 2px solid #e4e7ea; white-space: nowrap; }
.slock { width: 24px; height: 32px; margin-right: 22px; }
.sdown { width: 16px; height: 9px; margin-left: 21px; }
.current { background: #fff; color: #3a7d3e; padding: 0 31px 0 34px; border-bottom: 6px solid #f09d36; box-shadow: 0 0 4px rgba(0, 0, 0, .15); }
.explore { width: 248px; margin-left: auto; padding: 54px 0 0 24px; border-left: 2px solid #c4c4c4; background: #f8f9f9; }

/* Screenshot preview floating over the desktop */
.preview { position: absolute; right: 24px; bottom: 24px; width: 304px; padding: 8px; border-radius: 9px; background: #fff; box-shadow: 0 8px 90px rgba(0, 0, 0, .28), 0 0 6px rgba(0, 0, 0, .3); }
.preview svg { width: 288px; height: 180px; border: 1px solid #aaa; }
```
